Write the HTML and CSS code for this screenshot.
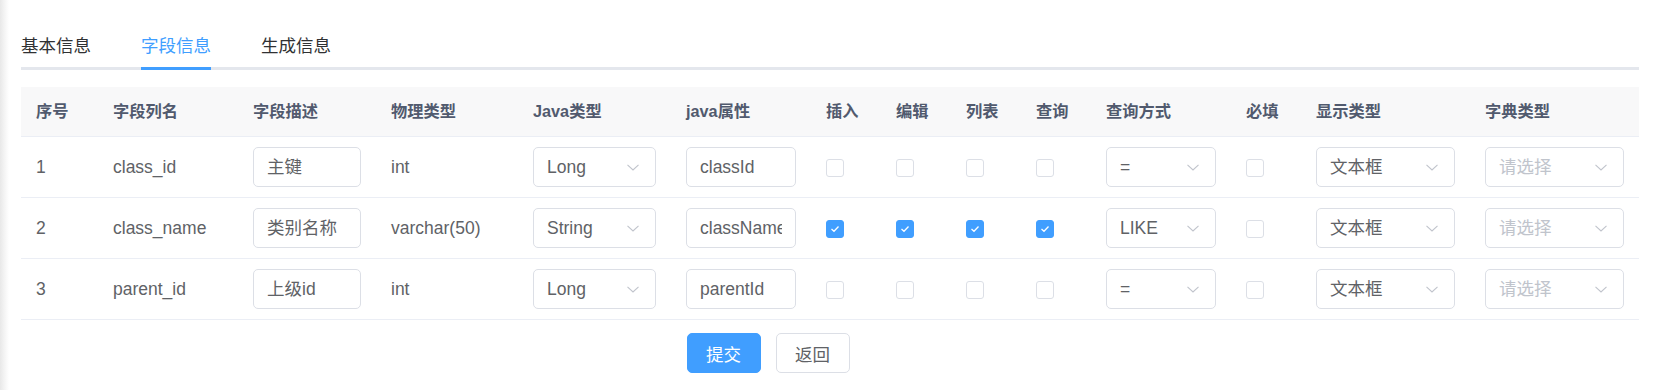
FILE: index.html
```html
<!DOCTYPE html>
<html>
  <head>
    <title>修改生成配置</title>
    <link rel="stylesheet" href="styles.css">
  </head>
  <body>
    <div class="app-container">
      <!-- 标签页 -->
      <div class="tabs">
        <div class="tab">基本信息</div>
        <div class="tab active">字段信息</div>
        <div class="tab">生成信息</div>
      </div>

      <!-- 字段表格 -->
      <table class="field-table">
        <colgroup>
          <col style="width: 77px">
          <col style="width: 140px">
          <col style="width: 138px">
          <col style="width: 142px">
          <col style="width: 153px">
          <col style="width: 140px">
          <col style="width: 70px">
          <col style="width: 70px">
          <col style="width: 70px">
          <col style="width: 70px">
          <col style="width: 140px">
          <col style="width: 70px">
          <col style="width: 169px">
          <col style="width: 169px">
        </colgroup>
        <thead>
          <tr>
            <th>序号</th>
            <th>字段列名</th>
            <th>字段描述</th>
            <th>物理类型</th>
            <th>Java类型</th>
            <th>java属性</th>
            <th>插入</th>
            <th>编辑</th>
            <th>列表</th>
            <th>查询</th>
            <th>查询方式</th>
            <th>必填</th>
            <th>显示类型</th>
            <th>字典类型</th>
          </tr>
        </thead>
        <tbody>
          <tr>
            <td>1</td>
            <td>class_id</td>
            <td><div class="input"><span class="val">主键</span></div></td>
            <td>int</td>
            <td><div class="input select"><span class="val">Long</span><svg class="arrow" viewBox="0 0 12 7"><path d="M0.5 0.8 L6 6 L11.5 0.8"/></svg></div></td>
            <td><div class="input"><span class="val">classId</span></div></td>
            <td><span class="checkbox"></span></td>
            <td><span class="checkbox"></span></td>
            <td><span class="checkbox"></span></td>
            <td><span class="checkbox"></span></td>
            <td><div class="input select"><span class="val">=</span><svg class="arrow" viewBox="0 0 12 7"><path d="M0.5 0.8 L6 6 L11.5 0.8"/></svg></div></td>
            <td><span class="checkbox"></span></td>
            <td><div class="input select"><span class="val">文本框</span><svg class="arrow" viewBox="0 0 12 7"><path d="M0.5 0.8 L6 6 L11.5 0.8"/></svg></div></td>
            <td><div class="input select"><span class="val placeholder">请选择</span><svg class="arrow" viewBox="0 0 12 7"><path d="M0.5 0.8 L6 6 L11.5 0.8"/></svg></div></td>
          </tr>
          <tr>
            <td>2</td>
            <td>class_name</td>
            <td><div class="input"><span class="val">类别名称</span></div></td>
            <td>varchar(50)</td>
            <td><div class="input select"><span class="val">String</span><svg class="arrow" viewBox="0 0 12 7"><path d="M0.5 0.8 L6 6 L11.5 0.8"/></svg></div></td>
            <td><div class="input"><span class="val">className</span></div></td>
            <td><span class="checkbox checked"><svg viewBox="0 0 10 8"><path d="M1.5 4 L4 6.3 L8.5 1.5"/></svg></span></td>
            <td><span class="checkbox checked"><svg viewBox="0 0 10 8"><path d="M1.5 4 L4 6.3 L8.5 1.5"/></svg></span></td>
            <td><span class="checkbox checked"><svg viewBox="0 0 10 8"><path d="M1.5 4 L4 6.3 L8.5 1.5"/></svg></span></td>
            <td><span class="checkbox checked"><svg viewBox="0 0 10 8"><path d="M1.5 4 L4 6.3 L8.5 1.5"/></svg></span></td>
            <td><div class="input select"><span class="val">LIKE</span><svg class="arrow" viewBox="0 0 12 7"><path d="M0.5 0.8 L6 6 L11.5 0.8"/></svg></div></td>
            <td><span class="checkbox"></span></td>
            <td><div class="input select"><span class="val">文本框</span><svg class="arrow" viewBox="0 0 12 7"><path d="M0.5 0.8 L6 6 L11.5 0.8"/></svg></div></td>
            <td><div class="input select"><span class="val placeholder">请选择</span><svg class="arrow" viewBox="0 0 12 7"><path d="M0.5 0.8 L6 6 L11.5 0.8"/></svg></div></td>
          </tr>
          <tr>
            <td>3</td>
            <td>parent_id</td>
            <td><div class="input"><span class="val">上级id</span></div></td>
            <td>int</td>
            <td><div class="input select"><span class="val">Long</span><svg class="arrow" viewBox="0 0 12 7"><path d="M0.5 0.8 L6 6 L11.5 0.8"/></svg></div></td>
            <td><div class="input"><span class="val">parentId</span></div></td>
            <td><span class="checkbox"></span></td>
            <td><span class="checkbox"></span></td>
            <td><span class="checkbox"></span></td>
            <td><span class="checkbox"></span></td>
            <td><div class="input select"><span class="val">=</span><svg class="arrow" viewBox="0 0 12 7"><path d="M0.5 0.8 L6 6 L11.5 0.8"/></svg></div></td>
            <td><span class="checkbox"></span></td>
            <td><div class="input select"><span class="val">文本框</span><svg class="arrow" viewBox="0 0 12 7"><path d="M0.5 0.8 L6 6 L11.5 0.8"/></svg></div></td>
            <td><div class="input select"><span class="val placeholder">请选择</span><svg class="arrow" viewBox="0 0 12 7"><path d="M0.5 0.8 L6 6 L11.5 0.8"/></svg></div></td>
          </tr>
        </tbody>
      </table>

      <!-- 按钮 -->
      <div class="actions">
        <button class="btn btn-primary">提交</button>
        <button class="btn">返回</button>
      </div>
    </div>
  </body>
</html>
```
FILE: styles.css
```css
* {
  box-sizing: border-box;
}
html,
body {
  margin: 0;
  padding: 0;
  height: 100%;
}
body {
  font-family: "Liberation Sans", Arial, "Noto Sans CJK SC", sans-serif;
  color: #606266;
  background: linear-gradient(to right, #e8e8e8 0, #f3f3f3 4px, #fff 9px) no-repeat;
}

.app-container {
  padding: 25px 20px 0 21px;
}

/* 标签页 */
.tabs {
  display: flex;
  border-bottom: 3px solid #e4e7ed;
  margin-bottom: 17px;
}
.tab {
  position: relative;
  padding: 0 25px;
  font-size: 17.5px;
  line-height: 42px;
  color: #303133;
}
.tab:first-child {
  padding-left: 0;
}
.tab.active {
  color: #409eff;
}
.tab.active::after {
  content: "";
  position: absolute;
  left: 25px;
  right: 25px;
  bottom: -3px;
  height: 3px;
  background: #409eff;
}

/* 表格 */
.field-table {
  width: 1618px;
  table-layout: fixed;
  border-collapse: separate;
  border-spacing: 0;
  font-size: 17.5px;
}
.field-table th {
  padding: 0 15px;
  line-height: 49px;
  text-align: left;
  font-size: 16.25px;
  font-weight: bold;
  color: #515a6e;
  background: #f8f8f9;
  border-bottom: 1px solid #ebeef5;
  white-space: nowrap;
}
.field-table td {
  padding: 10px 15px;
  line-height: 40px;
  border-bottom: 1px solid #ebeef5;
  white-space: nowrap;
  vertical-align: middle;
}

.input {
  display: flex;
  align-items: center;
  height: 40px;
  padding: 0 13px;
  border: 1px solid #dcdfe6;
  border-radius: 5px;
  background: #fff;
  color: #606266;
}
.input .val {
  flex: 1;
  overflow: hidden;
  white-space: nowrap;
  line-height: 38px;
}
.input .placeholder {
  color: #c0c4cc;
}
.select {
  padding-right: 16px;
}
.select .arrow {
  width: 12px;
  height: 7px;
  fill: none;
  stroke: #c0c4cc;
  stroke-width: 1.1;
}

.checkbox {
  display: inline-flex;
  align-items: center;
  justify-content: center;
  width: 18px;
  height: 18px;
  border: 1px solid #dcdfe6;
  border-radius: 3px;
  background: #fff;
  vertical-align: middle;
}
.checkbox.checked {
  background: #409eff;
  border-color: #409eff;
}
.checkbox svg {
  width: 10px;
  height: 8px;
  fill: none;
  stroke: #fff;
  stroke-width: 1.3;
}

/* 按钮 */
.actions {
  display: flex;
  justify-content: center;
  gap: 15px;
  margin-top: 13px;
  padding-right: 124px;
}
.btn {
  width: 74px;
  height: 40px;
  padding: 0;
  font-family: inherit;
  font-size: 17.5px;
  color: #606266;
  background: #fff;
  border: 1px solid #dcdfe6;
  border-radius: 5px;
  cursor: pointer;
}
.btn-primary {
  color: #fff;
  background: #409eff;
  border-color: #409eff;
}
```
